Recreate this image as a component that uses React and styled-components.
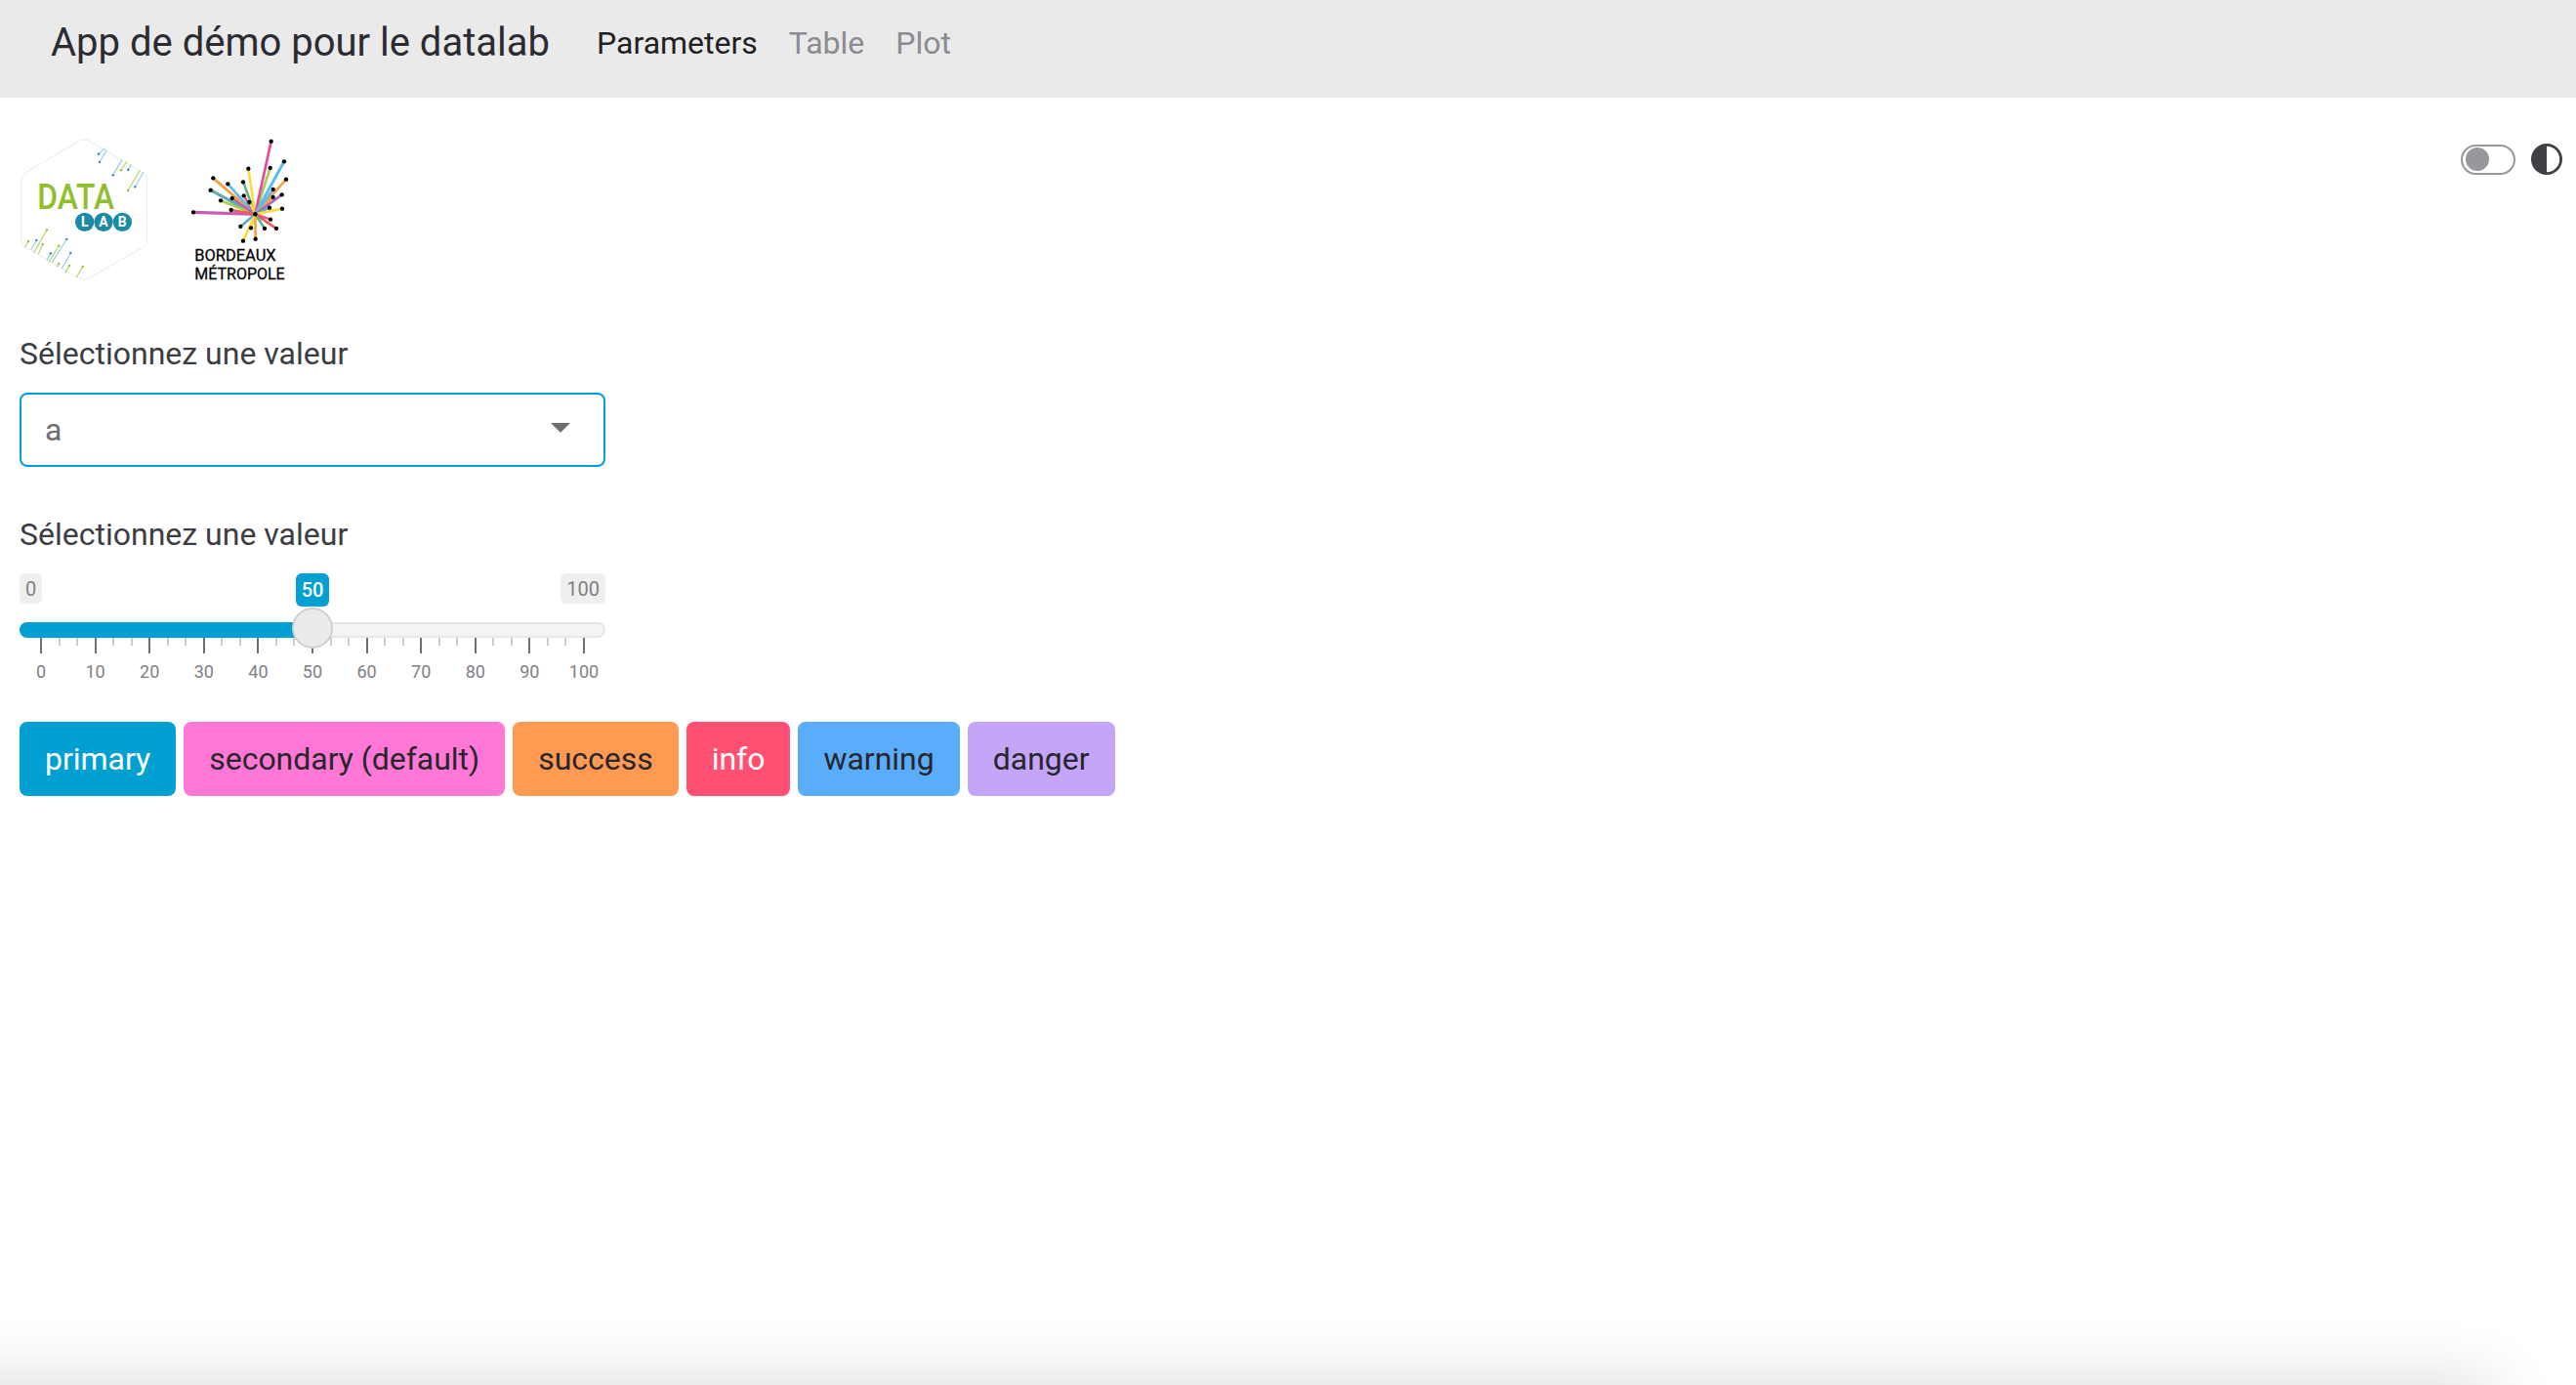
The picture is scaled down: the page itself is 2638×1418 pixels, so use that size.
import styled, { createGlobalStyle } from 'styled-components';

const GlobalStyle = createGlobalStyle`
  html, body {
    margin: 0;
    height: 100%;
    background: #fff;
    font-family: Roboto, "Liberation Sans", sans-serif;
    color: #3c3c43;
    overflow: hidden;
  }
`;

const Navbar = styled.nav`
  display: flex;
  align-items: center;
  height: 100px;
  box-sizing: border-box;
  padding: 0 0 13px 52px;
  background: #eaeaea;
`;

const Brand = styled.span`
  font-size: 40px;
  line-height: 60px;
  color: #2b2b32;
  margin-right: 48px;
`;

const NavLink = styled.a`
  font-size: 32px;
  line-height: 48px;
  margin-right: 32px;
  color: ${({ $active }) => ($active ? '#1f1f24' : '#8b8b90')};
`;

const Main = styled.main`
  padding: 30px 14px 0 20px;
`;

const TopRow = styled.div`
  display: flex;
  justify-content: space-between;
  align-items: flex-start;
  height: 160px;
`;

const Logos = styled.div`
  display: flex;
  gap: 25px;
`;

const ThemeSwitch = styled.div`
  display: flex;
  align-items: center;
  gap: 16px;
  margin-top: 17px;
`;

const SwitchTrack = styled.div`
  display: flex;
  align-items: center;
  box-sizing: border-box;
  width: 56px;
  height: 31px;
  padding-left: 3px;
  border: 2px solid #98989c;
  border-radius: 16px;
`;

const SwitchKnob = styled.div`
  width: 24px;
  height: 24px;
  border-radius: 50%;
  background: #98989c;
`;

const FieldLabel = styled.div`
  font-size: 32px;
  line-height: 48px;
  margin-top: ${({ $top }) => $top}px;
  margin-bottom: 16px;
  color: #3c3c43;
`;

const Select = styled.div`
  display: flex;
  align-items: center;
  justify-content: space-between;
  box-sizing: border-box;
  width: 600px;
  height: 76px;
  padding: 0 34px 0 24px;
  border: 2px solid #00a0d2;
  border-radius: 8px;
  font-size: 32px;
  color: #6e6e73;
`;

const Caret = styled.span`
  width: 0;
  height: 0;
  margin-top: -4px;
  border-left: 10px solid transparent;
  border-right: 10px solid transparent;
  border-top: 10px solid #6e6e73;
`;

const Slider = styled.div`
  width: 600px;
`;

const RangeLabels = styled.div`
  display: grid;
  grid-template-columns: 1fr auto 1fr;
  align-items: start;
  height: 50px;
`;

const MinMax = styled.span`
  justify-self: ${({ $end }) => ($end ? 'end' : 'start')};
  padding: 0 6px;
  height: 31px;
  line-height: 33px;
  font-size: 20px;
  color: #808085;
  background: #efefef;
  border-radius: 6px;
`;

const Current = styled.span`
  padding: 0 6px;
  height: 34px;
  line-height: 34px;
  font-size: 20px;
  font-weight: 500;
  color: #fff;
  background: #00a0d2;
  border-radius: 6px;
`;

const Track = styled.div`
  position: relative;
  box-sizing: border-box;
  height: 16px;
  background: #f4f4f4;
  border: 2px solid #e6e6e6;
  border-radius: 8px;
`;

const TrackFill = styled.div`
  position: absolute;
  top: -2px;
  left: -2px;
  height: 16px;
  background: #00a0d2;
  border-radius: 8px 0 0 8px;
`;

const Handle = styled.div`
  position: absolute;
  top: -17px;
  box-sizing: border-box;
  width: 42px;
  height: 42px;
  margin-left: -21px;
  background: #ebebeb;
  border: 2px solid #cfcfcf;
  border-radius: 50%;
`;

const TickRow = styled.div`
  display: flex;
  justify-content: space-between;
  margin: 0 22px;
  height: 47px;
`;

const Tick = styled.div`
  display: flex;
  flex-direction: column;
  align-items: center;
  width: 0;
`;

const TickLine = styled.span`
  flex: none;
  width: 2px;
  height: ${({ $major }) => ($major ? 16 : 8)}px;
  background: ${({ $major }) => ($major ? '#6f6f74' : '#cccccc')};
`;

const TickLabel = styled.span`
  margin-top: 7px;
  font-size: 18px;
  line-height: 24px;
  color: #808085;
`;

const ButtonRow = styled.div`
  display: flex;
  gap: 8px;
  margin-top: 39px;
`;

const Button = styled.button`
  height: 76px;
  padding: 0 26px;
  border: 0;
  border-radius: 8px;
  font-family: inherit;
  font-size: 32px;
  letter-spacing: -0.02px;
  background: ${({ $bg }) => $bg};
  color: ${({ $light }) => ($light ? '#fff' : '#26262c')};
`;

const PageShadow = styled.div`
  position: fixed;
  left: -100px;
  right: 85px;
  top: 100%;
  height: 40px;
  box-shadow: 0 0 66px rgba(0, 0, 0, 0.19);
`;

const hexPath =
  'M244 72 Q258 64 272 72 L440 171 Q452 178 452 192 L452 378 Q452 392 440 399 L272 495 Q258 503 244 495 L77 399 Q65 392 65 378 L65 192 Q65 178 77 171 Z';

const LIME = '#b4d36a';
const SKY = '#9acde0';

const circuits = [
  [303, 113, 322, 95, SKY, '#1b8aa6'],
  [306, 138, 328, 100, SKY, '#1b8aa6'],
  [347, 178, 375, 130, SKY, '#1b8aa6'],
  [372, 163, 390, 135, LIME, '#8fbe2f'],
  [394, 162, 403, 145, SKY, '#1b8aa6'],
  [393, 225, 430, 163, LIME, '#8fbe2f'],
  [415, 214, 441, 168, SKY, '#1b8aa6'],
  [144, 346, 105, 415, LIME, '#8fbe2f'],
  [112, 378, 95, 408, SKY, '#1b8aa6'],
  [87, 381, 77, 400, LIME, '#8fbe2f'],
  [131, 390, 118, 420, LIME, '#8fbe2f'],
  [205, 375, 160, 445, SKY, '#1b8aa6'],
  [156, 418, 143, 440, SKY, '#1b8aa6'],
  [181, 395, 150, 445, LIME, '#8fbe2f'],
  [217, 417, 190, 465, SKY, '#1b8aa6'],
  [181, 450, 175, 460, LIME, '#8fbe2f'],
  [213, 456, 200, 478, LIME, '#8fbe2f'],
  [254, 459, 235, 492, LIME, '#8fbe2f'],
];

function DataLabLogo() {
  return (
    <svg width="135" height="160" viewBox="60 30 405 480">
      <path d={hexPath} fill="#fff" stroke="#e4e4e4" strokeWidth="2.5" />
      {circuits.map(([x1, y1, x2, y2, line, dot]) => (
        <g key={`${x1}-${y1}`}>
          <line x1={x1} y1={y1} x2={x2} y2={y2} stroke={line} strokeWidth="3.5" />
          <circle cx={x1} cy={y1} r="3.5" fill={dot} />
        </g>
      ))}
      <text x="115" y="282" fontSize="110" fontWeight="500" fill="#8fbe2f" fontFamily="Roboto, sans-serif" textLength="236" lengthAdjust="spacingAndGlyphs">
        DATA
      </text>
      {['L', 'A', 'B'].map((letter, i) => (
        <g key={letter}>
          <circle cx={260 + i * 58} cy="322" r="29" fill="#1b8aa6" />
          <text x={260 + i * 58} y="337" fontSize="42" fontWeight="700" fill="#fff" textAnchor="middle" fontFamily="Roboto, sans-serif">
            {letter}
          </text>
        </g>
      ))}
    </svg>
  );
}

const rays = [
  [54, 262, '#c65fae', 10],
  [115, 157, '#f7a24b', 9],
  [107, 194, '#5fa8b5', 9],
  [138, 226, '#a8cc50', 8],
  [160, 175, '#5bbde8', 8],
  [173, 219, '#b868a8', 8],
  [170, 255, '#ee5a5a', 8],
  [207, 169, '#5db58a', 8],
  [209, 211, '#e8479b', 7],
  [226, 231, '#fbdc3c', 7],
  [223, 128, '#fbdc3c', 8],
  [290, 126, '#a8cc50', 8],
  [293, 44, '#e8479b', 8],
  [333, 106, '#5bbde8', 9],
  [339, 161, '#f7a24b', 8],
  [299, 192, '#5bbde8', 8],
  [299, 216, '#f7a24b', 7],
  [326, 208, '#a06bc0', 8],
  [288, 248, '#5fa8b5', 7],
  [327, 251, '#fbdc3c', 8],
  [291, 284, '#e8479b', 7],
  [309, 312, '#ee5a5a', 8],
  [273, 312, '#5db58a', 8],
  [231, 310, '#fbdc3c', 7],
  [199, 306, '#5fa5d8', 8],
  [245, 344, '#f7a24b', 8],
  [207, 350, '#fbdc3c', 8],
];

function MetropoleLogo() {
  return (
    <svg width="130" height="160" viewBox="0 0 390 480">
      {rays.map(([x, y, color, width]) => (
        <line key={`${x}-${y}`} x1="244" y1="268" x2={x} y2={y} stroke={color} strokeWidth={width} />
      ))}
      {rays.map(([x, y]) => (
        <circle key={`${x}-${y}`} cx={x} cy={y} r="6.5" fill="#000" />
      ))}
      <circle cx="244" cy="268" r="7" fill="#000" />
      <text x="58" y="411" fontSize="48" fill="#000" stroke="#000" strokeWidth="0.8" fontFamily="Roboto, sans-serif" textLength="250" lengthAdjust="spacingAndGlyphs">
        BORDEAUX
      </text>
      <text x="58" y="467" fontSize="48" fill="#000" stroke="#000" strokeWidth="0.8" fontFamily="Roboto, sans-serif" textLength="277" lengthAdjust="spacingAndGlyphs">
        MÉTROPOLE
      </text>
    </svg>
  );
}

function ContrastIcon() {
  return (
    <svg width="32" height="32" viewBox="0 0 16 16" fill="#3f4045">
      <path fillRule="evenodd" d="M8 0a8 8 0 1 0 0 16A8 8 0 0 0 8 0zM8 1.4a6.6 6.6 0 0 1 0 13.2z" />
    </svg>
  );
}

const buttons = [
  { label: 'primary', bg: '#00a0d2', light: true },
  { label: 'secondary (default)', bg: '#ff78d6' },
  { label: 'success', bg: '#ff9a52' },
  { label: 'info', bg: '#ff5072', light: true },
  { label: 'warning', bg: '#5aadfa' },
  { label: 'danger', bg: '#c5a5f8' },
];

const sliderValue = 50;
const ticks = Array.from({ length: 31 }, (_, i) => i);

export default function App() {
  return (
    <>
      <GlobalStyle />
      <Navbar>
        <Brand>App de démo pour le datalab</Brand>
        <NavLink $active>Parameters</NavLink>
        <NavLink>Table</NavLink>
        <NavLink>Plot</NavLink>
      </Navbar>
      <Main>
        <TopRow>
          <Logos>
            <DataLabLogo />
            <MetropoleLogo />
          </Logos>
          <ThemeSwitch>
            <SwitchTrack>
              <SwitchKnob />
            </SwitchTrack>
            <ContrastIcon />
          </ThemeSwitch>
        </TopRow>

        <FieldLabel $top={48}>Sélectionnez une valeur</FieldLabel>
        <Select>
          a
          <Caret />
        </Select>

        <FieldLabel $top={45}>Sélectionnez une valeur</FieldLabel>
        <Slider>
          <RangeLabels>
            <MinMax>0</MinMax>
            <Current>{sliderValue}</Current>
            <MinMax $end>100</MinMax>
          </RangeLabels>
          <Track>
            <TrackFill style={{ width: `${sliderValue}%` }} />
            <Handle style={{ left: `${sliderValue}%` }} />
          </Track>
          <TickRow>
            {ticks.map((i) => (
              <Tick key={i}>
                <TickLine $major={i % 3 === 0} />
                {i % 3 === 0 && <TickLabel>{(i / 3) * 10}</TickLabel>}
              </Tick>
            ))}
          </TickRow>
        </Slider>

        <ButtonRow>
          {buttons.map((b) => (
            <Button key={b.label} $bg={b.bg} $light={b.light}>
              {b.label}
            </Button>
          ))}
        </ButtonRow>
      </Main>
      <PageShadow />
    </>
  );
}
